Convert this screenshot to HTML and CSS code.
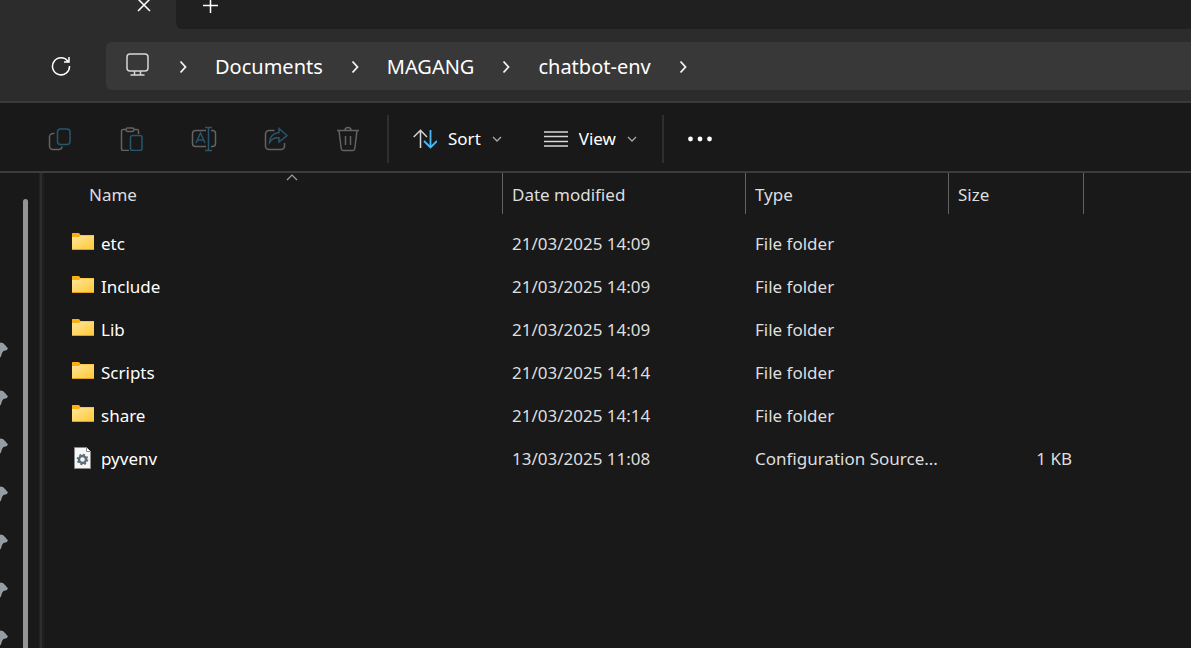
FILE: index.html
```html
<!DOCTYPE html>
<html lang="en">
<head>
<meta charset="utf-8">
<title>chatbot-env</title>
<link rel="stylesheet" href="styles.css">
</head>
<body>
<svg class="defs" aria-hidden="true">
  <defs>
    <linearGradient id="paper" x1="0" y1="0" x2="1" y2="1">
      <stop offset="0" stop-color="#ffe69b"/><stop offset="1" stop-color="#ffc938"/>
    </linearGradient>
    <symbol id="folder" viewBox="0 0 22 17">
      <path d="M0 0.5Q0 0 .5 0H7l1.500 2H22v15H0z" fill="#f9b013"/>
      <path d="M0 4h7l1.500-1.500H22V16H0z" fill="url(#paper)"/>
      <path d="M0 16h22v1H0z" fill="#dfa11d"/>
    </symbol>
    <symbol id="chevron" viewBox="0 0 8 14">
      <path d="M1.500 1.500 6.500 7l-5 5.500" fill="none" stroke="#f4f4f4" stroke-width="1.800"/>
    </symbol>
    <symbol id="down" viewBox="0 0 10 6">
      <path d="m1 1 4 4 4-4" fill="none" stroke="#a8a8a8" stroke-width="1.300"/>
    </symbol>
    <symbol id="pin" viewBox="0 0 8 16">
      <path d="M0 .5 3 1l2.500 2.500L8 6.500 6.500 8.300 3.500 9 2 11 .8 15 0 15.300z" fill="#929da4"/>
    </symbol>
  </defs>
</svg>

<header class="titlebar">
  <div class="tab">
    <button class="plain" aria-label="Close tab"><svg width="14" height="14" viewBox="0 0 14 14"><path d="m1 1 12 12M13 1 1 13" class="line white"/></svg></button>
  </div>
  <div class="strip">
    <button class="plain" aria-label="New tab"><svg width="16" height="16" viewBox="0 0 16 16"><path d="M8.500 1v15M1 8.500h15" class="line white"/></svg></button>
  </div>
</header>

<nav class="navbar" aria-label="Address">
  <button class="plain refresh" aria-label="Refresh"><svg width="20" height="20" viewBox="0 0 20 20"><path d="M17 5.500A8.500 8.500 0 1 0 18.500 10M18 1v5h-5" class="line white"/></svg></button>
  <div class="address">
    <svg class="computer" width="24" height="24" viewBox="0 0 24 24"><rect x="1" y="1" width="21" height="17" rx="3" class="line pale"/><path d="M8.500 18v3.500M14.500 18v3.500M4.500 22h14" class="line pale"/></svg>
    <svg class="chev"><use href="#chevron"/></svg>
    <a href="#">Documents</a>
    <svg class="chev"><use href="#chevron"/></svg>
    <a href="#">MAGANG</a>
    <svg class="chev"><use href="#chevron"/></svg>
    <a href="#">chatbot-env</a>
    <svg class="chev"><use href="#chevron"/></svg>
  </div>
</nav>

<div class="toolbar" role="toolbar">
  <button class="tool" aria-label="Copy"><svg width="24" height="24" viewBox="0 0 24 24"><path d="M6.500 6.500H5A3.500 3.500 0 0 0 1.500 10v9A3.500 3.500 0 0 0 5 22.500h6a3 3 0 0 0 3-3" class="line gray"/><rect x="9.500" y="2" width="12.500" height="15.500" rx="3" class="line blue"/></svg></button>
  <button class="tool" aria-label="Paste"><svg width="24" height="24" viewBox="0 0 24 24"><path d="M6 2.500H3Q1.500 2.500 1.500 4v18q0 1.500 1.500 1.500h6M14 2.500h3q1.500 0 1.500 1.500v3" class="line gray"/><rect x="6" y="1" width="8" height="3.500" rx="1.700" class="line gray"/><rect x="10.500" y="8.500" width="11.500" height="15" rx="2" class="line blue"/></svg></button>
  <button class="tool" aria-label="Rename"><svg width="26" height="26" viewBox="0 0 26 26"><path d="M15 4.500H4.500a3 3 0 0 0-3 3v10a3 3 0 0 0 3 3H15M20 4.500h1.500a3 3 0 0 1 3 3v10a3 3 0 0 1-3 3H20" class="line gray"/><path d="m5 17 4.500-10L14 17M6.500 14h6M17.500 2v22M14 1.500h7M14 24.500h7" class="line blue"/></svg></button>
  <button class="tool" aria-label="Share"><svg width="24" height="24" viewBox="0 0 24 24"><path d="M10.500 3.500H5A3.500 3.500 0 0 0 1.500 7v12A3.500 3.500 0 0 0 5 22.500h12a3.500 3.500 0 0 0 3.500-3.500v-3" class="line gray"/><path d="M15 1.500 23 8.500l-8 6.500v-4.200Q9 10 5.500 15.500q0-8.500 9.500-10z" class="line blue"/></svg></button>
  <button class="tool" aria-label="Delete"><svg width="24" height="26" viewBox="0 0 24 26"><path d="M1 4.500h22M3 4.500l2.200 18q.3 2 2 2h9.600q1.700 0 2-2L21 4.500M9 4.500Q9 1.500 12 1.500t3 3M9.500 10v9M14.500 10v9" class="line gray"/></svg></button>
  <span class="rule"></span>
  <button class="menu"><svg width="24" height="20" viewBox="0 0 24 20"><path d="M7.500 19V1.500M.7 8 7.500 1.200 14 8" class="line pale"/><path d="M17.500 1v17.500M11 12l6.500 6.500L24 12" class="line bright"/></svg><span>Sort</span><svg class="down"><use href="#down"/></svg></button>
  <button class="menu"><svg width="24" height="16" viewBox="0 0 24 16"><path d="M0 1h24M0 5.500h24M0 10.500h24M0 15h24" class="line pale"/></svg><span>View</span><svg class="down"><use href="#down"/></svg></button>
  <span class="rule second"></span>
  <button class="menu" aria-label="See more"><svg width="24" height="6" viewBox="0 0 24 6"><circle cx="2.500" cy="3" r="2.400"/><circle cx="12" cy="3" r="2.400"/><circle cx="21.500" cy="3" r="2.400"/></svg></button>
</div>

<div class="body">
  <aside class="sidebar">
    <div class="pins">
      <svg><use href="#pin"/></svg><svg><use href="#pin"/></svg><svg><use href="#pin"/></svg><svg><use href="#pin"/></svg><svg><use href="#pin"/></svg><svg><use href="#pin"/></svg><svg><use href="#pin"/></svg>
    </div>
    <div class="scroll"></div>
  </aside>
  <main class="files">
    <table>
      <colgroup><col class="c-name"><col class="c-date"><col class="c-type"><col class="c-size"><col></colgroup>
      <thead>
        <tr><th class="name">Name<svg class="up" width="12" height="7" viewBox="0 0 12 7"><path d="m1 6 5-5 5 5" fill="none" stroke="#a0a0a0" stroke-width="1.200"/></svg></th><th>Date modified</th><th>Type</th><th>Size</th><td></td></tr>
      </thead>
      <tbody>
        <tr><td class="file"><div><svg class="folder"><use href="#folder"/></svg>etc</div></td><td>21/03/2025 14:09</td><td>File folder</td><td></td><td></td></tr>
        <tr><td class="file"><div><svg class="folder"><use href="#folder"/></svg>Include</div></td><td>21/03/2025 14:09</td><td>File folder</td><td></td><td></td></tr>
        <tr><td class="file"><div><svg class="folder"><use href="#folder"/></svg>Lib</div></td><td>21/03/2025 14:09</td><td>File folder</td><td></td><td></td></tr>
        <tr><td class="file"><div><svg class="folder"><use href="#folder"/></svg>Scripts</div></td><td>21/03/2025 14:14</td><td>File folder</td><td></td><td></td></tr>
        <tr><td class="file"><div><svg class="folder"><use href="#folder"/></svg>share</div></td><td>21/03/2025 14:14</td><td>File folder</td><td></td><td></td></tr>
        <tr><td class="file"><div><svg class="config" viewBox="0 0 22 22"><path d="M2.500.5h12l4 4v17h-16z" fill="#f6f6f6" stroke="#8a8a8a"/><path d="M14.500.5v4h4" fill="#fff" stroke="#8a8a8a"/><circle cx="10.500" cy="12.500" r="3.500" fill="none" stroke="#5b6d78" stroke-width="2.400"/><circle cx="10.500" cy="12.500" r="5" fill="none" stroke="#5b6d78" stroke-width="1.600" stroke-dasharray="1.960 1.960"/></svg>pyvenv</div></td><td>13/03/2025 11:08</td><td>Configuration Source...</td><td class="size">1 KB</td><td></td></tr>
      </tbody>
    </table>
  </main>
</div>
</body>
</html>
```
FILE: styles.css
```css
* { box-sizing: border-box; }

body {
  margin: 0;
  min-height: 100vh;
  display: flex;
  flex-direction: column;
  background: #191919;
  color: #fff;
  font: 17px/24px "Noto Sans", "Open Sans", sans-serif;
}

svg { display: block; flex: none; }
.defs { position: absolute; width: 0; height: 0; }

button {
  border: 0;
  background: none;
  color: inherit;
  font: inherit;
  padding: 0;
}

.line { fill: none; stroke-width: 1.5; }
.white { stroke: #fff; }
.pale { stroke: #d6d6d6; }
.gray { stroke: #636363; }
.blue { stroke: #28566f; }
.bright { stroke: #4cb8f5; stroke-width: 1.8; }

.titlebar {
  display: flex;
  height: 29px;
  background: #2c2c2c;
}
.tab {
  width: 176px;
  padding-right: 25px;
  display: flex;
  justify-content: flex-end;
  align-items: flex-start;
}
.tab .plain { margin-top: -2px; }
.strip {
  flex: 1;
  padding-left: 26px;
  display: flex;
  align-items: flex-start;
  background: #202020;
  border-bottom-left-radius: 6px;
}
.strip .plain { margin-top: -3px; }

.navbar {
  display: flex;
  align-items: center;
  height: 74px;
  padding: 2px 0 0 51px;
  background: #2c2c2c;
  border-bottom: 2px solid #3a3a3a;
}
.address {
  flex: 1;
  display: flex;
  align-items: center;
  gap: 28px;
  height: 48px;
  margin-left: 35px;
  padding: 2px 0 0 20px;
  background: #383838;
  border-radius: 6px 0 0 6px;
  font-size: 20px;
}
.address a { color: #fff; text-decoration: none; }
.computer { margin: 0 1px 4px 0; }
.chev { width: 8px; height: 14px; }

.toolbar {
  display: flex;
  align-items: center;
  height: 70px;
  padding: 4px 0 0 24px;
  border-bottom: 2px solid #3c3c3c;
}
.tool {
  width: 72px;
  height: 48px;
  display: flex;
  align-items: center;
  justify-content: center;
}
.rule {
  width: 2px;
  height: 48px;
  margin: 0 12px 0 3px;
  background: #2e2e2e;
}
.rule.second { margin-left: 13px; }
.menu {
  display: flex;
  align-items: center;
  gap: 11px;
  height: 48px;
  padding: 0 12px;
}
.menu + .menu { margin-left: 18px; }
.menu circle { fill: #fff; }
.down { width: 10px; height: 6px; }

.body { flex: 1; display: flex; }
.sidebar {
  width: 44px;
  display: flex;
  justify-content: space-between;
  background: linear-gradient(to right, #191919 39px, #222 39px, #222 40px, #2d2d2d 40px, #2d2d2d 42px, #1f1f1f 42px);
  padding-right: 16px;
}
.pins {
  display: flex;
  flex-direction: column;
  gap: 32px;
  height: 0;
  padding-top: 169px;
}
.pins svg { width: 8px; height: 16px; }
.scroll {
  width: 5px;
  margin-top: 26px;
  background: #949494;
  border-radius: 3px 3px 0 0;
}

.files { flex: 1; min-width: 0; }
table {
  width: 100%;
  table-layout: fixed;
  border-collapse: separate;
  border-spacing: 0;
}
.c-name { width: 459px; }
.c-date { width: 243px; }
.c-type { width: 203px; }
.c-size { width: 135px; }

th, td { padding: 0 9px; text-align: left; white-space: nowrap; color: #dedede; }
th {
  height: 41px;
  padding-top: 2px;
  font-weight: 400;
  border-right: 1px solid #636363;
}
th.name { position: relative; padding-left: 45px; }
.up { position: absolute; top: 1px; left: 242px; }
tbody::before { content: ""; display: table-row; height: 8px; }
tbody td { height: 43px; }
.file { padding-left: 28px; color: #fff; }
.file div { display: flex; align-items: center; gap: 7px; }
.folder { width: 22px; height: 17px; margin-bottom: 4px; }
.config { width: 22px; height: 22px; margin-bottom: 2px; }
td.size { text-align: right; padding-right: 12px; }
```
